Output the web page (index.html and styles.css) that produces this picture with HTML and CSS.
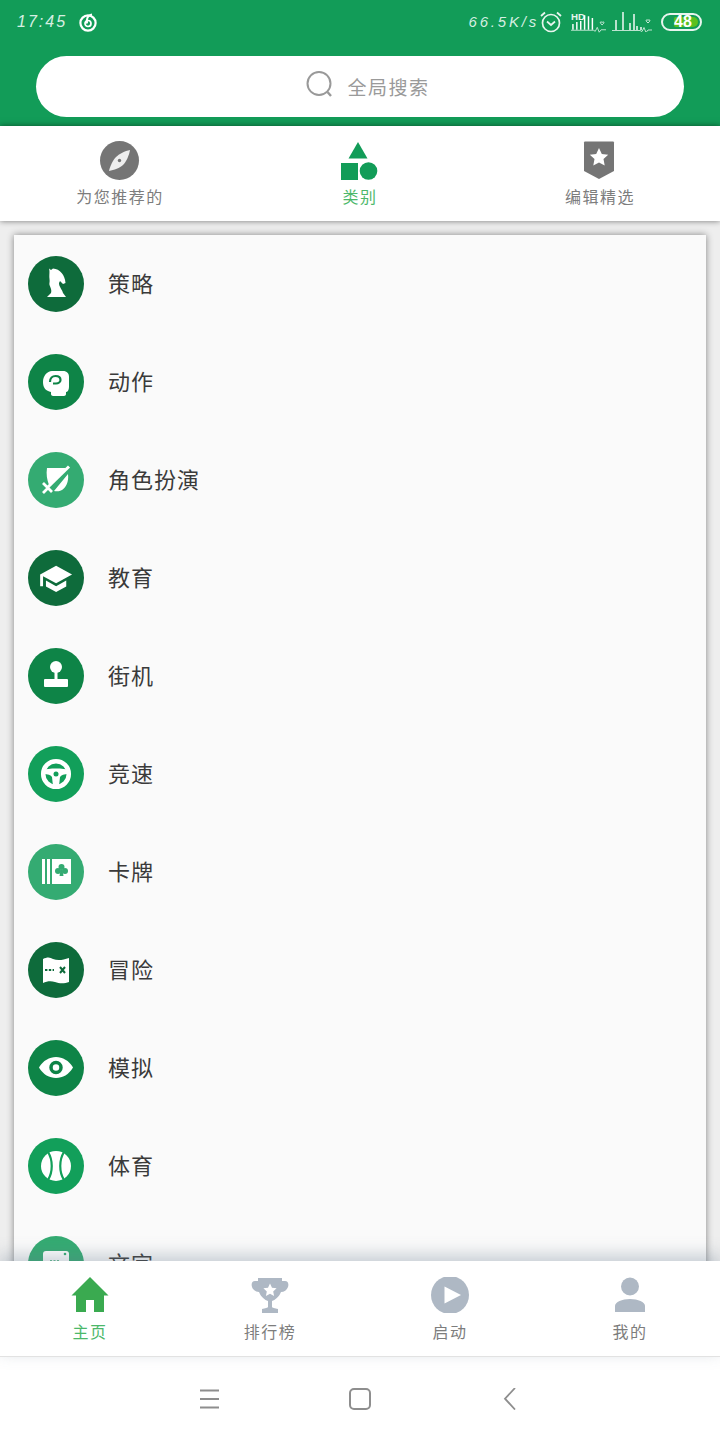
FILE: index.html
```html
<!DOCTYPE html>
<html lang="zh">
<head>
<meta charset="utf-8">
<title>类别</title>
<link rel="stylesheet" href="styles.css">
</head>
<body>
<div class="page">
  <header class="header">
    <div class="status">
      <div class="status-left">
        <span class="time">17:45</span>
        <svg class="ic-music" viewBox="0 0 20 20"><circle cx="10" cy="11" r="7.6" fill="none" stroke="#fff" stroke-width="2.2"/><circle cx="10" cy="11.5" r="3" fill="none" stroke="#fff" stroke-width="1.7"/><path d="M9 11.5c-.8-4 .5-8.500 5-9" fill="none" stroke="#fff" stroke-width="2"/></svg>
      </div>
      <div class="status-right">
        <span class="speed">66.5K/s</span>
        <svg class="ic-alarm" viewBox="0 0 22 22"><circle cx="11" cy="12" r="8.500" fill="none" stroke="#e8f5ee" stroke-width="1.700"/><path d="M7 10.500l4 3.500 4-3.500" fill="none" stroke="#e8f5ee" stroke-width="1.700"/><path d="M1 5l4-3.500M21 5l-4-3.500" stroke="#e8f5ee" stroke-width="1.800"/></svg>
        <svg class="ic-sig1" viewBox="0 0 36 20"><text x="0" y="8" class="hd">HD</text><path d="M2 18V12M6 18V10M10 18V9M14 18V3M18 18V4M22 18V6" stroke="#fff" stroke-width="1.500"/><path d="M0 18.500H23l2 1 2-4 2 5 2-2.500h5" fill="none" stroke="#e8f5ee" stroke-width=".8"/><path d="M31 8.500c1-1.500 2.500-.5 1.500 1L31 11l-1.500-1.500c-1-1.500.5-2.500 1.500-1z" transform="translate(1 2)" fill="none" stroke="#fff" stroke-width=".8"/></svg>
        <svg class="ic-sig2" viewBox="0 0 40 20"><path d="M4 18V8M11 18V0M18 18V11M22 18V2M25 18V14M29 18V15" stroke="#fff" stroke-width="1.400"/><path d="M0 18.500H28l2 1 2-4 2 5 2-2.500h4" fill="none" stroke="#e8f5ee" stroke-width=".8"/><path d="M36 8.500c1-1.500 2.500-.5 1.500 1L36 11l-1.500-1.500c-1-1.500.5-2.500 1.500-1z" fill="none" stroke="#fff" stroke-width=".8"/></svg>
        <div class="battery"><span class="battery-fill"></span><span class="battery-num">48</span></div>
      </div>
    </div>
    <div class="search">
      <svg class="ic-search" viewBox="0 0 27 27"><circle cx="13" cy="12.500" r="11.500" fill="none" stroke="#999" stroke-width="2"/><path d="M21.500 21l3.500 4" stroke="#999" stroke-width="2.400"/></svg>
      <span class="search-text">全局搜索</span>
    </div>
  </header>

  <nav class="tabs">
    <div class="tab">
      <svg class="tab-ic" viewBox="0 0 40 40"><circle cx="19.500" cy="19.500" r="19.500" fill="#757575"/><path d="M30 9C29 15 26 21 23 24 20 27 14 29 9 30 10 25 13 19 16 16 19 13 25 10 30 9z" fill="#eee"/><circle cx="19.500" cy="19.500" r="1.700" fill="#757575"/></svg>
      <span class="tab-label">为您推荐的</span>
    </div>
    <div class="tab tab-active">
      <svg class="tab-ic" viewBox="0 0 40 40"><path d="M18 1l9.500 16.500H8.500z" fill="#129c58"/><rect x="1" y="22" width="17" height="17" fill="#129c58"/><circle cx="28.500" cy="30" r="8.800" fill="#129c58"/></svg>
      <span class="tab-label">类别</span>
    </div>
    <div class="tab">
      <svg class="tab-ic" viewBox="0 0 40 40"><path d="M5 0.500H33q1 0 1 1V30l-15 8-15-8V1.500q0-1 1-1z" fill="#757575"/><path d="M19 7l2.800 5.900 6.400.8-4.700 4.400 1.200 6.400-5.700-3.100-5.700 3.100 1.200-6.400-4.700-4.400 6.400-.8z" fill="#fff"/></svg>
      <span class="tab-label">编辑精选</span>
    </div>
  </nav>

  <main class="content">
    <div class="card">
      <div class="row"><span class="badge b-dark"><svg viewBox="0 0 56 56"><path d="M21 12.500l2 1.500 2-1.500c7 .5 12 6.500 12.500 14.500L35 28l-3-3-1 2c0 4 3 6 4 10l3 4H19l4-4c1-3-.5-5-1.500-8-.5-2 .5-3 0-6-.5-5 .5-7-.5-10.500z" fill="#fff"/></svg></span><span class="row-label">策略</span></div>
      <div class="row"><span class="badge b-mid"><svg viewBox="0 0 56 56"><path d="M24 17h11c4 0 6 2.500 6 6v10c0 3-1.500 5-3 5v2c0 1-1 2-2 2H25c-1 0-2-1-2-2v-2c-5-1-8-4-8-10 0-6 4-11 9-11z" fill="#fff"/><path d="M22 28c0-4 2.500-6 5.500-6 3.500 0 5 2 5 4s-2 3.500-4.500 3.500h-3" fill="none" stroke="#0e8447" stroke-width="2.200"/></svg></span><span class="row-label">动作</span></div>
      <div class="row"><span class="badge b-light"><svg viewBox="0 0 56 56"><path d="M19 16h19L21 33c-2-5-3-11-2-17zM40 22c1 8-2 14-7 16.500-3 1-5 1-7 .5z" fill="#fff"/><path d="M41 14.500L20 35" stroke="#fff" stroke-width="3"/><path d="M15 31l9 9M15 41l5-5" stroke="#fff" stroke-width="2.800"/></svg></span><span class="row-label">角色扮演</span></div>
      <div class="row"><span class="badge b-dark"><svg viewBox="0 0 56 56"><path transform="translate(45.500 11.500) scale(-1.450 1.450)" d="M5 13.180v4L12 21l7-3.820v-4L12 17l-7-3.820zM12 3L1 9l11 6 9-4.910V17h2V9L12 3z" fill="#fff"/></svg></span><span class="row-label">教育</span></div>
      <div class="row"><span class="badge b-mid"><svg viewBox="0 0 56 56"><circle cx="28" cy="19" r="6" fill="#fff"/><rect x="26.500" y="22" width="3" height="10" fill="#fff"/><rect x="16" y="31" width="24" height="8" rx="1" fill="#fff"/></svg></span><span class="row-label">街机</span></div>
      <div class="row"><span class="badge b-brand"><svg viewBox="0 0 56 56"><circle cx="28" cy="28" r="12.800" fill="none" stroke="#fff" stroke-width="4.500"/><path d="M15 24c5-2 21-2 26 0v4c-5 0-8 1-9 3l-1 9h-6l-1-9c-1-2-4-3-9-3z" fill="#fff"/><circle cx="28" cy="28" r="2.500" fill="#129f5a"/></svg></span><span class="row-label">竞速</span></div>
      <div class="row"><span class="badge b-light"><svg viewBox="0 0 56 56"><rect x="14" y="15" width="3" height="25" fill="#fff"/><rect x="19" y="15" width="3" height="25" fill="#fff"/><rect x="24" y="15" width="19" height="25" fill="#fff"/><circle cx="33.500" cy="23" r="3" fill="#34ab72"/><circle cx="30" cy="27" r="3" fill="#34ab72"/><circle cx="37" cy="27" r="3" fill="#34ab72"/><path d="M32.500 26h2l1 6h-4z" fill="#34ab72"/></svg></span><span class="row-label">卡牌</span></div>
      <div class="row"><span class="badge b-dark"><svg viewBox="0 0 56 56"><path d="M15 17c4-2 7-2 10 0 5 2 10 1 16-1v24c-4 1.500-9 2-14 0-4-1.500-8-1-12 1z" fill="#fff"/><path d="M17 28h9" stroke="#0e6b3b" stroke-width="1.800" stroke-dasharray="2.400 1.400"/><path d="M32 25l5 6M37 25l-5 6" stroke="#0e6b3b" stroke-width="2"/></svg></span><span class="row-label">冒险</span></div>
      <div class="row"><span class="badge b-mid"><svg viewBox="0 0 56 56"><path d="M11 27.500c8-14 26-14 34 0-8 14-26 14-34 0z" fill="#fff"/><circle cx="28" cy="27.500" r="5" fill="none" stroke="#0e8447" stroke-width="3.500"/></svg></span><span class="row-label">模拟</span></div>
      <div class="row"><span class="badge b-brand"><svg viewBox="0 0 56 56"><circle cx="28" cy="28" r="15" fill="#fff"/><path d="M20 14c5 8 5 20 0 28M36 14c-5 8-5 20 0 28" fill="none" stroke="#129f5a" stroke-width="2.200"/></svg></span><span class="row-label">体育</span></div>
      <div class="row"><span class="badge b-light"><svg viewBox="0 0 56 56"><rect x="15" y="15" width="26" height="22" rx="3" fill="#fff"/><circle cx="37" cy="18" r="1.300" fill="#34ab72"/><path d="M22 25h10" stroke="#34ab72" stroke-width="1.500" stroke-dasharray="2 1.500"/></svg></span><span class="row-label">文字</span></div>
    </div>
  </main>

  <nav class="bottom">
    <div class="bottom-item bottom-active">
      <svg class="bottom-ic" viewBox="0 0 38 36"><path d="M19 0L37.500 18.500H33V35H23V23H15V35H5V18.500H.5z" fill="#3aaa50"/></svg>
      <span class="bottom-label">主页</span>
    </div>
    <div class="bottom-item">
      <svg class="bottom-ic" viewBox="0 0 38 36"><path d="M7 1H31V4H34C37 4 38 7 37 10 36 13 33 15 30 15 28 20 24 23 21 24V30C21 31 24 31 27 32V36H11V32C14 31 17 31 17 30V24C14 23 10 20 8 15 5 15 2 13 1 10 0 7 1 4 4 4H7Z" fill="#aeb8c4"/><path d="M19 6.500l2 4.200 4.600.6-3.400 3.200.9 4.600-4.100-2.300-4.100 2.300.9-4.600-3.400-3.200 4.600-.6z" fill="#fff"/></svg>
      <span class="bottom-label">排行榜</span>
    </div>
    <div class="bottom-item">
      <svg class="bottom-ic" viewBox="0 0 38 36"><circle cx="19" cy="18" r="19" fill="#aeb8c4"/><path d="M13.500 9.500L30 18 13.500 26.500z" fill="#fff"/></svg>
      <span class="bottom-label">启动</span>
    </div>
    <div class="bottom-item">
      <svg class="bottom-ic" viewBox="0 0 38 36"><circle cx="19" cy="9.500" r="9" fill="#aeb8c4"/><path d="M4 35v-6c0-4 7-7 15-7s15 3 15 7v6z" fill="#aeb8c4"/></svg>
      <span class="bottom-label">我的</span>
    </div>
  </nav>

  <footer class="sysnav">
    <div class="sys-btn"><svg class="sys-ic" viewBox="0 0 22 22"><path d="M1 2.500h19M1 11h19M1 19.500h19" stroke="#8e8e8e" stroke-width="1.800"/></svg></div>
    <div class="sys-btn"><svg class="sys-ic" viewBox="0 0 22 22"><rect x="1" y="1" width="20" height="20" rx="4" fill="none" stroke="#8e8e8e" stroke-width="2"/></svg></div>
    <div class="sys-btn"><svg class="sys-ic" viewBox="0 0 22 22"><path d="M16 0L6 10.700 16 21.500" fill="none" stroke="#8e8e8e" stroke-width="1.800"/></svg></div>
  </footer>
</div>
</body>
</html>
```
FILE: styles.css
```css
* { box-sizing: border-box; }
html, body { margin: 0; padding: 0; }
body { font-family: "Noto Sans CJK SC", "Noto Sans", sans-serif; background: #fff; }
svg { display: block; }

.page { width: 720px; height: 1440px; display: flex; flex-direction: column; overflow: hidden; }

.header { height: 126px; background: #129c58; display: flex; flex-direction: column; flex: none; }
.status { height: 43px; padding: 0 18px 0 17px; display: flex; align-items: center; justify-content: space-between; }
.status-left { display: flex; align-items: center; gap: 11px; }
.time { font: italic 16px/1 "Liberation Sans", sans-serif; color: #d6efe2; letter-spacing: 2px; }
.ic-music { width: 20px; height: 20px; }
.status-right { display: flex; align-items: center; }
.speed { font: italic 15px/1 "Liberation Sans", sans-serif; color: #d6efe2; letter-spacing: 2.800px; margin-right: 1px; white-space: nowrap; }
.ic-alarm { width: 22px; height: 22px; margin-right: 9px; }
.ic-sig1 { width: 35px; height: 20px; margin-right: 6px; overflow: visible; }
.hd { font: bold 10px "Liberation Sans", sans-serif; fill: #e8f5ee; }
.ic-sig2 { width: 40px; height: 20px; margin-right: 9px; }
.battery { width: 41px; height: 18px; border: 2px solid #e8f5ee; border-radius: 9px; position: relative; display: flex; align-items: center; justify-content: center; }
.battery-fill { position: absolute; top: 2px; left: 11px; right: 2px; bottom: 2px; background: #5cc01e; border-radius: 2px 6px 6px 2px; }
.battery-num { position: relative; font: bold 16px/1 "Liberation Sans", sans-serif; color: #fff; margin-left: 3px; }

.search { margin: 13px 36px 0; height: 61px; background: #fff; border-radius: 31px; display: flex; align-items: center; justify-content: center; gap: 14px; padding-left: 16px; }
.ic-search { width: 27px; height: 27px; margin-top: -5px; }
.search-text { font-size: 19px; line-height: 24px; color: #9a9a9a; letter-spacing: 1.500px; }

.tabs { height: 95px; background: #fff; display: flex; flex: none; position: relative; z-index: 2; box-shadow: 0 0 6px rgba(0,0,0,.5); }
.tab { flex: 1; display: flex; flex-direction: column; align-items: center; padding-top: 15px; }
.tab-ic { width: 40px; height: 40px; }
.tab-label { margin-top: 3px; font-size: 16px; line-height: 24px; letter-spacing: 1.500px; color: #7d7d7d; }
.tab-active .tab-label { color: #4cb86a; }

.content { flex: 1; min-height: 0; background: #eeeeee; padding: 14px 14px 0; overflow: hidden; }
.card { background: #fafafa; box-shadow: 0 0 7px rgba(0,0,0,.45); padding: 0 14px; }
.row { height: 98px; display: flex; align-items: center; gap: 24px; }
.badge { width: 56px; height: 56px; border-radius: 50%; flex: none; }
.badge svg { width: 56px; height: 56px; }
.b-dark { background: #0e6b3b; }
.b-mid { background: #0e8447; }
.b-brand { background: #129f5a; }
.b-light { background: #34ab72; }
.row-label { font-size: 22px; line-height: 30px; letter-spacing: 1px; color: #3a3a3a; padding-bottom: 4px; box-sizing: content-box; }

.bottom { height: 96px; background: #fff; display: flex; flex: none; border-bottom: 1px solid #e2e2e2; position: relative; z-index: 2; box-shadow: 0 -6px 16px rgba(100,120,140,.35); }
.bottom-item { flex: 1; display: flex; flex-direction: column; align-items: center; padding-top: 16px; }
.bottom-ic { width: 38px; height: 36px; }
.bottom-label { margin-top: 6px; font-size: 16px; line-height: 24px; letter-spacing: 1.500px; color: #7d7d7d; }
.bottom-active .bottom-label { color: #4cb86a; }

.sysnav { height: 83px; flex: none; background: #fff; display: flex; justify-content: center; align-items: center; }
.sys-btn { width: 150px; display: flex; justify-content: center; }
.sys-ic { width: 22px; height: 22px; }
```
